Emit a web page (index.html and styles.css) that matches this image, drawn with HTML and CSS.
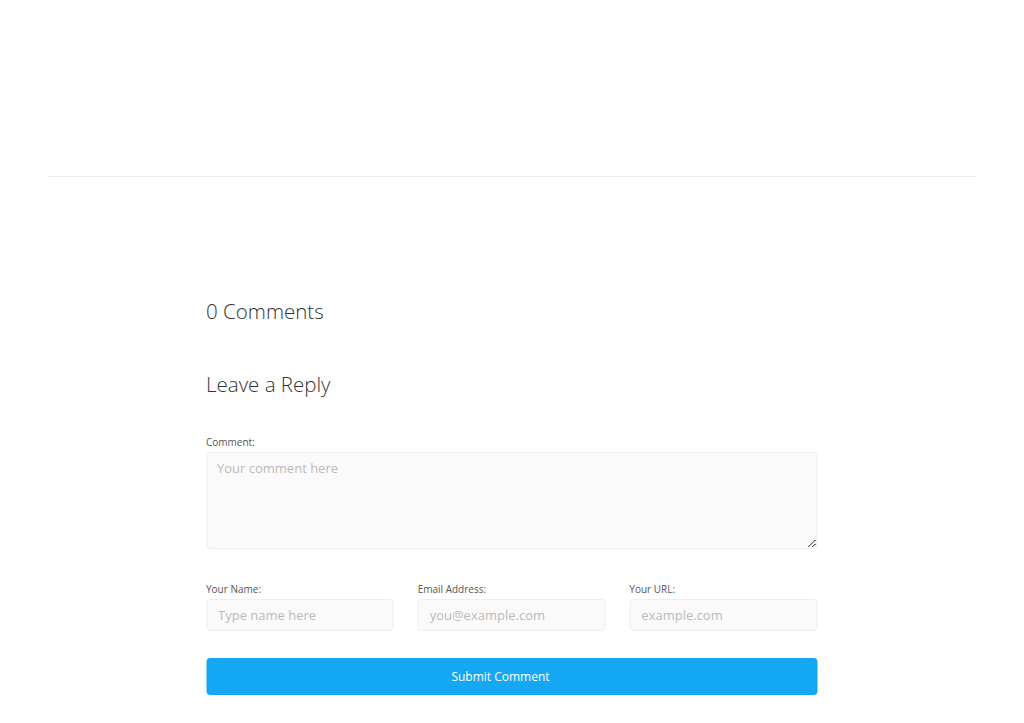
FILE: index.html
```html
<!DOCTYPE html>
<html lang="en">
  <head>
    <meta charset="UTF-8" />
    <meta name="viewport" content="width=device-width, initial-scale=1.0" />
    <title>Leave a Reply</title>
    <link rel="stylesheet" href="styles.css">
  </head>
  <body>
    <div class="page">
      <div class="top"></div>
      <hr class="divider" />
      <div class="comments">
        <h2 class="title">0 Comments</h2>
        <h2 class="title reply-title">Leave a Reply</h2>
        <form class="reply-form">
          <label class="field">
            <span class="label">Comment:</span>
            <textarea class="textarea" placeholder="Your comment here"></textarea>
          </label>
          <div class="row">
            <label class="field">
              <span class="label">Your Name:</span>
              <input class="input" type="text" placeholder="Type name here" />
            </label>
            <label class="field">
              <span class="label">Email Address:</span>
              <input class="input" type="text" placeholder="you@example.com" />
            </label>
            <label class="field">
              <span class="label">Your URL:</span>
              <input class="input" type="text" placeholder="example.com" />
            </label>
          </div>
          <button class="submit" type="button">Submit Comment</button>
        </form>
      </div>
    </div>
  </body>
</html>
```

FILE: styles.css
```css
* {
  margin: 0;
  padding: 0;
  box-sizing: border-box;
}
body {
  font-family: "Open Sans", sans-serif;
  color: #333;
  background: #fff;
}
.page {
  padding: 0 48px;
}
.top {
  height: 176px;
}
.divider {
  border: none;
  border-top: 1px solid #eee;
}
.comments {
  width: 611px;
  margin: 0 auto;
  padding-top: 121px;
  transform: translateX(-0.5px);
}
.comments .title {
  font-size: 20.5px;
  font-weight: 300;
  line-height: 26px;
  color: #333;
}
.comments .reply-title {
  margin-top: 47px;
}
.reply-form {
  margin-top: 38px;
}
.reply-form .field {
  display: flex;
  flex-direction: column;
  min-width: 0;
}
.reply-form .label {
  font-size: 10px;
  line-height: 14px;
  color: #555;
  margin-bottom: 3px;
}
.reply-form .textarea,
.reply-form .input {
  width: 100%;
  font-family: "Open Sans", sans-serif;
  font-size: 13px;
  color: #333;
  background: #fafafa;
  border: 1px solid #eee;
  border-radius: 4px;
  outline: none;
}
.reply-form .textarea {
  height: 97px;
  padding: 6px 10px;
  resize: vertical;
}
.reply-form .input {
  height: 32px;
  padding: 0 11px;
}
.reply-form ::placeholder {
  color: #bbb;
}
.reply-form .row {
  display: grid;
  grid-template-columns: repeat(3, minmax(0, 1fr));
  gap: 24px;
  margin-top: 33px;
}
.reply-form .submit {
  display: block;
  width: 100%;
  height: 37px;
  margin-top: 27px;
  padding-right: 22px;
  border: none;
  border-radius: 4px;
  background: #14a8f4;
  color: #fff;
  font-family: "Open Sans", sans-serif;
  font-size: 12px;
}
```
